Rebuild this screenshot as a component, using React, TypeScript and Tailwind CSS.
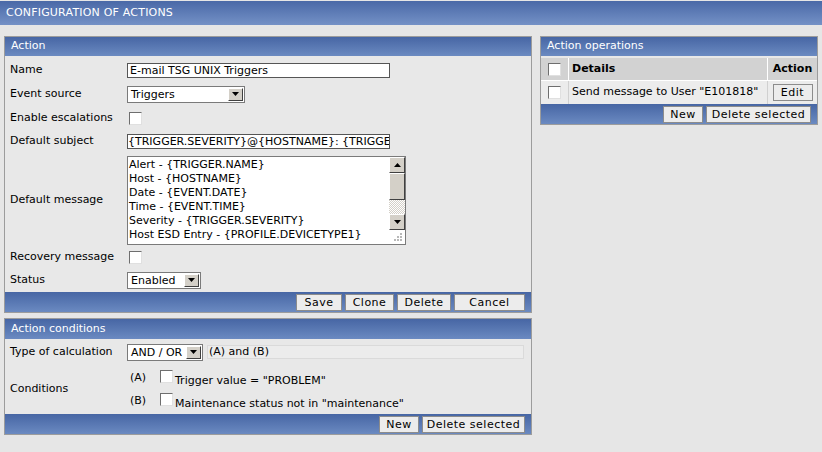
import React from 'react';

const font = { fontFamily: '"DejaVu Sans", Verdana, sans-serif' };

const Btn = ({ label, w }: { label: string; w: string }) => (
  <button
    className={`h-[17px] ${w} bg-[#ececec] border border-[#8c8c8c] text-[11px] text-black leading-none tracking-[0.5px]`}
  >
    {label}
  </button>
);

const Check = () => (
  <span className="inline-block w-[13px] h-[13px] bg-white border border-t-[#6e6e6e] border-l-[#6e6e6e] border-r-[#e0e0e0] border-b-[#e0e0e0]" />
);

const Combo = ({ value, w }: { value: string; w: string }) => (
  <div className={`flex items-center h-[17px] ${w} bg-white border border-[#7a7a7a]`}>
    <span className="flex-1 pl-[3px] text-[11px] leading-none truncate">{value}</span>
    <span className="flex items-center justify-center w-[15px] h-[13px] mr-[1px] bg-[#d4d0c8] border border-t-white border-l-white border-r-[#404040] border-b-[#404040]">
      <svg width="7" height="4" viewBox="0 0 7 4">
        <path d="M0 0h7L3.5 4z" fill="#000" />
      </svg>
    </span>
  </div>
);

const PanelHeader = ({ title, h }: { title: string; h: string }) => (
  <div className={`${h} flex items-center px-[6px] bg-gradient-to-b from-[#4766a4] to-[#6b8ac1] text-white text-[11px]`}>
    {title}
  </div>
);

const Footer = ({ children, h }: { children: React.ReactNode; h: string }) => (
  <div className={`${h} flex items-center justify-end gap-[3px] pr-[6px] bg-gradient-to-b from-[#4766a4] to-[#6b8ac1]`}>
    {children}
  </div>
);

const Row = ({ label, h, children }: { label: string; h: string; children: React.ReactNode }) => (
  <div className={`flex items-center ${h}`}>
    <div className="w-[122px] pl-[5px] shrink-0">{label}</div>
    <div className="flex items-center">{children}</div>
  </div>
);

const messageLines = [
  'Alert - {TRIGGER.NAME}',
  'Host - {HOSTNAME}',
  'Date - {EVENT.DATE}',
  'Time - {EVENT.TIME}',
  'Severity - {TRIGGER.SEVERITY}',
  'Host ESD Entry - {PROFILE.DEVICETYPE1}',
];

export default function App() {
  return (
    <div className="w-[822px] h-[452px] bg-[#e6e6e6] text-[11px] text-black overflow-hidden" style={font}>
      {/* Page title */}
      <div className="mt-[1px] h-[24px] flex items-center pl-[6px] bg-gradient-to-b from-[#4a69a7] to-[#7491c6] text-white tracking-[0.2px]">
        CONFIGURATION OF ACTIONS
      </div>

      <div className="flex items-start gap-[8px] pl-[4px] pt-[11px]">
        {/* Left column */}
        <div className="w-[528px] flex flex-col gap-[5px]">
          {/* Action */}
          <div className="border border-[#9c9c9c] bg-[#e8e8e8]">
            <PanelHeader title="Action" h="h-[19px]" />
            <div className="pt-[2px]">
              <Row label="Name" h="h-[24px]">
                <div className="w-[263px] h-[15px] bg-white border border-[#555] pl-[2px] leading-[13px]">
                  E-mail TSG UNIX Triggers
                </div>
              </Row>
              <Row label="Event source" h="h-[24px]">
                <Combo value="Triggers" w="w-[118px]" />
              </Row>
              <Row label="Enable escalations" h="h-[24px]">
                <span className="ml-[2px] flex"><Check /></span>
              </Row>
              <Row label="Default subject" h="h-[23px]">
                <div className="w-[263px] h-[15px] bg-white border border-[#555] leading-[13px] overflow-hidden whitespace-nowrap">
                  {'{TRIGGER.SEVERITY}@{HOSTNAME}: {TRIGGER.NAME}'}
                </div>
              </Row>
              <Row label="Default message" h="h-[94px]">
                <div className="relative w-[279px] h-[89px] bg-white border border-[#7a7a7a] flex">
                  <div className="flex-1 pl-[1px] pt-[1px] leading-[14px] overflow-hidden whitespace-nowrap">
                    {messageLines.map(l => (
                      <div key={l}>{l}</div>
                    ))}
                  </div>
                  <div className="w-[16px] h-[73px] flex flex-col bg-[repeating-conic-gradient(#d4d0c8_0_25%,#fff_0_50%)] bg-[length:2px_2px]">
                    <span className="h-[16px] flex items-center justify-center bg-[#d4d0c8] border border-t-white border-l-white border-r-[#404040] border-b-[#404040]">
                      <svg width="7" height="4" viewBox="0 0 7 4"><path d="M3.5 0L7 4H0z" fill="#000" /></svg>
                    </span>
                    <span className="h-[27px] bg-[#d4d0c8] border border-t-white border-l-white border-r-[#404040] border-b-[#404040]" />
                    <span className="flex-1" />
                    <span className="h-[16px] flex items-center justify-center bg-[#d4d0c8] border border-t-white border-l-white border-r-[#404040] border-b-[#404040]">
                      <svg width="7" height="4" viewBox="0 0 7 4"><path d="M0 0h7L3.5 4z" fill="#000" /></svg>
                    </span>
                  </div>
                  <svg className="absolute right-[2px] bottom-[2px]" width="10" height="10" viewBox="0 0 10 10">
                    <g fill="#b8b8b8">
                      <rect x="7" y="1" width="2" height="2" />
                      <rect x="4" y="4" width="2" height="2" />
                      <rect x="7" y="4" width="2" height="2" />
                      <rect x="1" y="7" width="2" height="2" />
                      <rect x="4" y="7" width="2" height="2" />
                      <rect x="7" y="7" width="2" height="2" />
                    </g>
                  </svg>
                </div>
              </Row>
              <Row label="Recovery message" h="h-[21px]">
                <span className="ml-[2px] flex"><Check /></span>
              </Row>
              <Row label="Status" h="h-[24px]">
                <Combo value="Enabled" w="w-[74px]" />
              </Row>
            </div>
            <Footer h="h-[20px]">
              <Btn label="Save" w="w-[46px]" />
              <Btn label="Clone" w="w-[49px]" />
              <Btn label="Delete" w="w-[54px]" />
              <Btn label="Cancel" w="w-[71px]" />
            </Footer>
          </div>

          {/* Action conditions */}
          <div className="border border-[#9c9c9c] bg-[#e8e8e8]">
            <PanelHeader title="Action conditions" h="h-[20px]" />
            <Row label="Type of calculation" h="h-[26px]">
              <Combo value="AND / OR" w="w-[76px]" />
              <div className="ml-[4px] w-[317px] h-[14px] bg-[#ececec] border border-[#dadada] pl-[1px] leading-[12px]">
                (A) and (B)
              </div>
            </Row>
            <div className="flex items-center h-[49px]">
              <div className="w-[122px] pl-[5px] shrink-0">Conditions</div>
              <div className="flex flex-col gap-[6px] pt-[1px]">
                <div className="flex items-start h-[17px]">
                  <span className="w-[33px] pl-[3px]">(A)</span>
                  <Check />
                  <span className="ml-[2px] mt-[3px]">Trigger value = "PROBLEM"</span>
                </div>
                <div className="flex items-start h-[17px]">
                  <span className="w-[33px] pl-[3px]">(B)</span>
                  <Check />
                  <span className="ml-[2px] mt-[3px]">Maintenance status not in "maintenance"</span>
                </div>
              </div>
            </div>
            <Footer h="h-[20px]">
              <Btn label="New" w="w-[40px]" />
              <Btn label="Delete selected" w="w-[103px]" />
            </Footer>
          </div>
        </div>

        {/* Right column */}
        <div className="w-[278px] border border-[#9c9c9c] bg-[#e8e8e8]">
          <PanelHeader title="Action operations" h="h-[19px]" />
          <div className="mt-[2px] flex flex-col">
            <div className="flex h-[23px] bg-[#d2d2d2] font-bold border-b border-white">
              <div className="w-[28px] flex items-center justify-center border-r border-white"><Check /></div>
              <div className="flex-1 flex items-center pl-[3px] border-r border-white">Details</div>
              <div className="w-[49px] flex items-center justify-center">Action</div>
            </div>
            <div className="flex h-[23px] bg-[#ececec]">
              <div className="w-[28px] flex items-center justify-center border-r border-[#d0d0d0]"><Check /></div>
              <div className="flex-1 flex items-center pl-[3px] border-r border-[#d0d0d0]">Send message to User "E101818"</div>
              <div className="w-[49px] flex items-center justify-center">
                <Btn label="Edit" w="w-[40px]" />
              </div>
            </div>
          </div>
          <Footer h="h-[20px]">
            <Btn label="New" w="w-[40px]" />
            <Btn label="Delete selected" w="w-[105px]" />
          </Footer>
        </div>
      </div>
    </div>
  );
}
